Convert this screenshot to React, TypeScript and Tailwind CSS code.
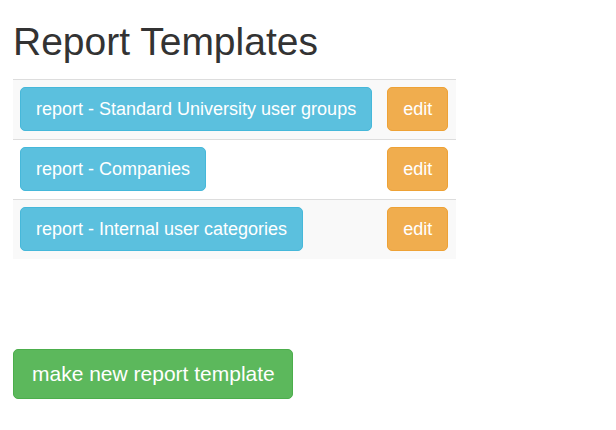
import React from "react";

const rows = [
  "report - Standard University user groups",
  "report - Companies",
  "report - Internal user categories",
];

export default function App() {
  return (
    <div
      className="min-h-[430px] bg-white px-[13px] pt-[20px] text-[#333]"
      style={{ fontFamily: '"Liberation Sans", Arial, sans-serif' }}
    >
      <h1 className="m-0 text-[39px] leading-[43px] font-normal text-[#333]">Report Templates</h1>
      <table className="mt-[16px] w-[443px] border-collapse">
        <tbody>
          {rows.map((r, i) => (
            <tr key={r} className={i % 2 === 0 ? "bg-[#f9f9f9]" : "bg-white"}>
              <td className="border-t border-[#ddd] pl-[7px] pr-2 pt-[7px] pb-2 align-top">
                <button className="whitespace-nowrap rounded-[5px] border border-[#46b8da] bg-[#5bc0de] px-[15px] py-[10px] text-[18px] leading-[22px] text-white">
                  {r}
                </button>
              </td>
              <td className="border-t border-[#ddd] pl-[7px] pr-2 pt-[7px] pb-2 text-right align-top">
                <button className="whitespace-nowrap rounded-[5px] border border-[#eea236] bg-[#f0ad4e] px-[15px] py-[10px] text-[18px] leading-[22px] text-white">
                  edit
                </button>
              </td>
            </tr>
          ))}
        </tbody>
      </table>
      <button className="mt-[90px] whitespace-nowrap rounded-[5px] border border-[#4cae4c] bg-[#5cb85c] pl-[18px] pr-[17px] py-[10px] text-[21px] leading-[28px] text-white">
        make new report template
      </button>
    </div>
  );
}
